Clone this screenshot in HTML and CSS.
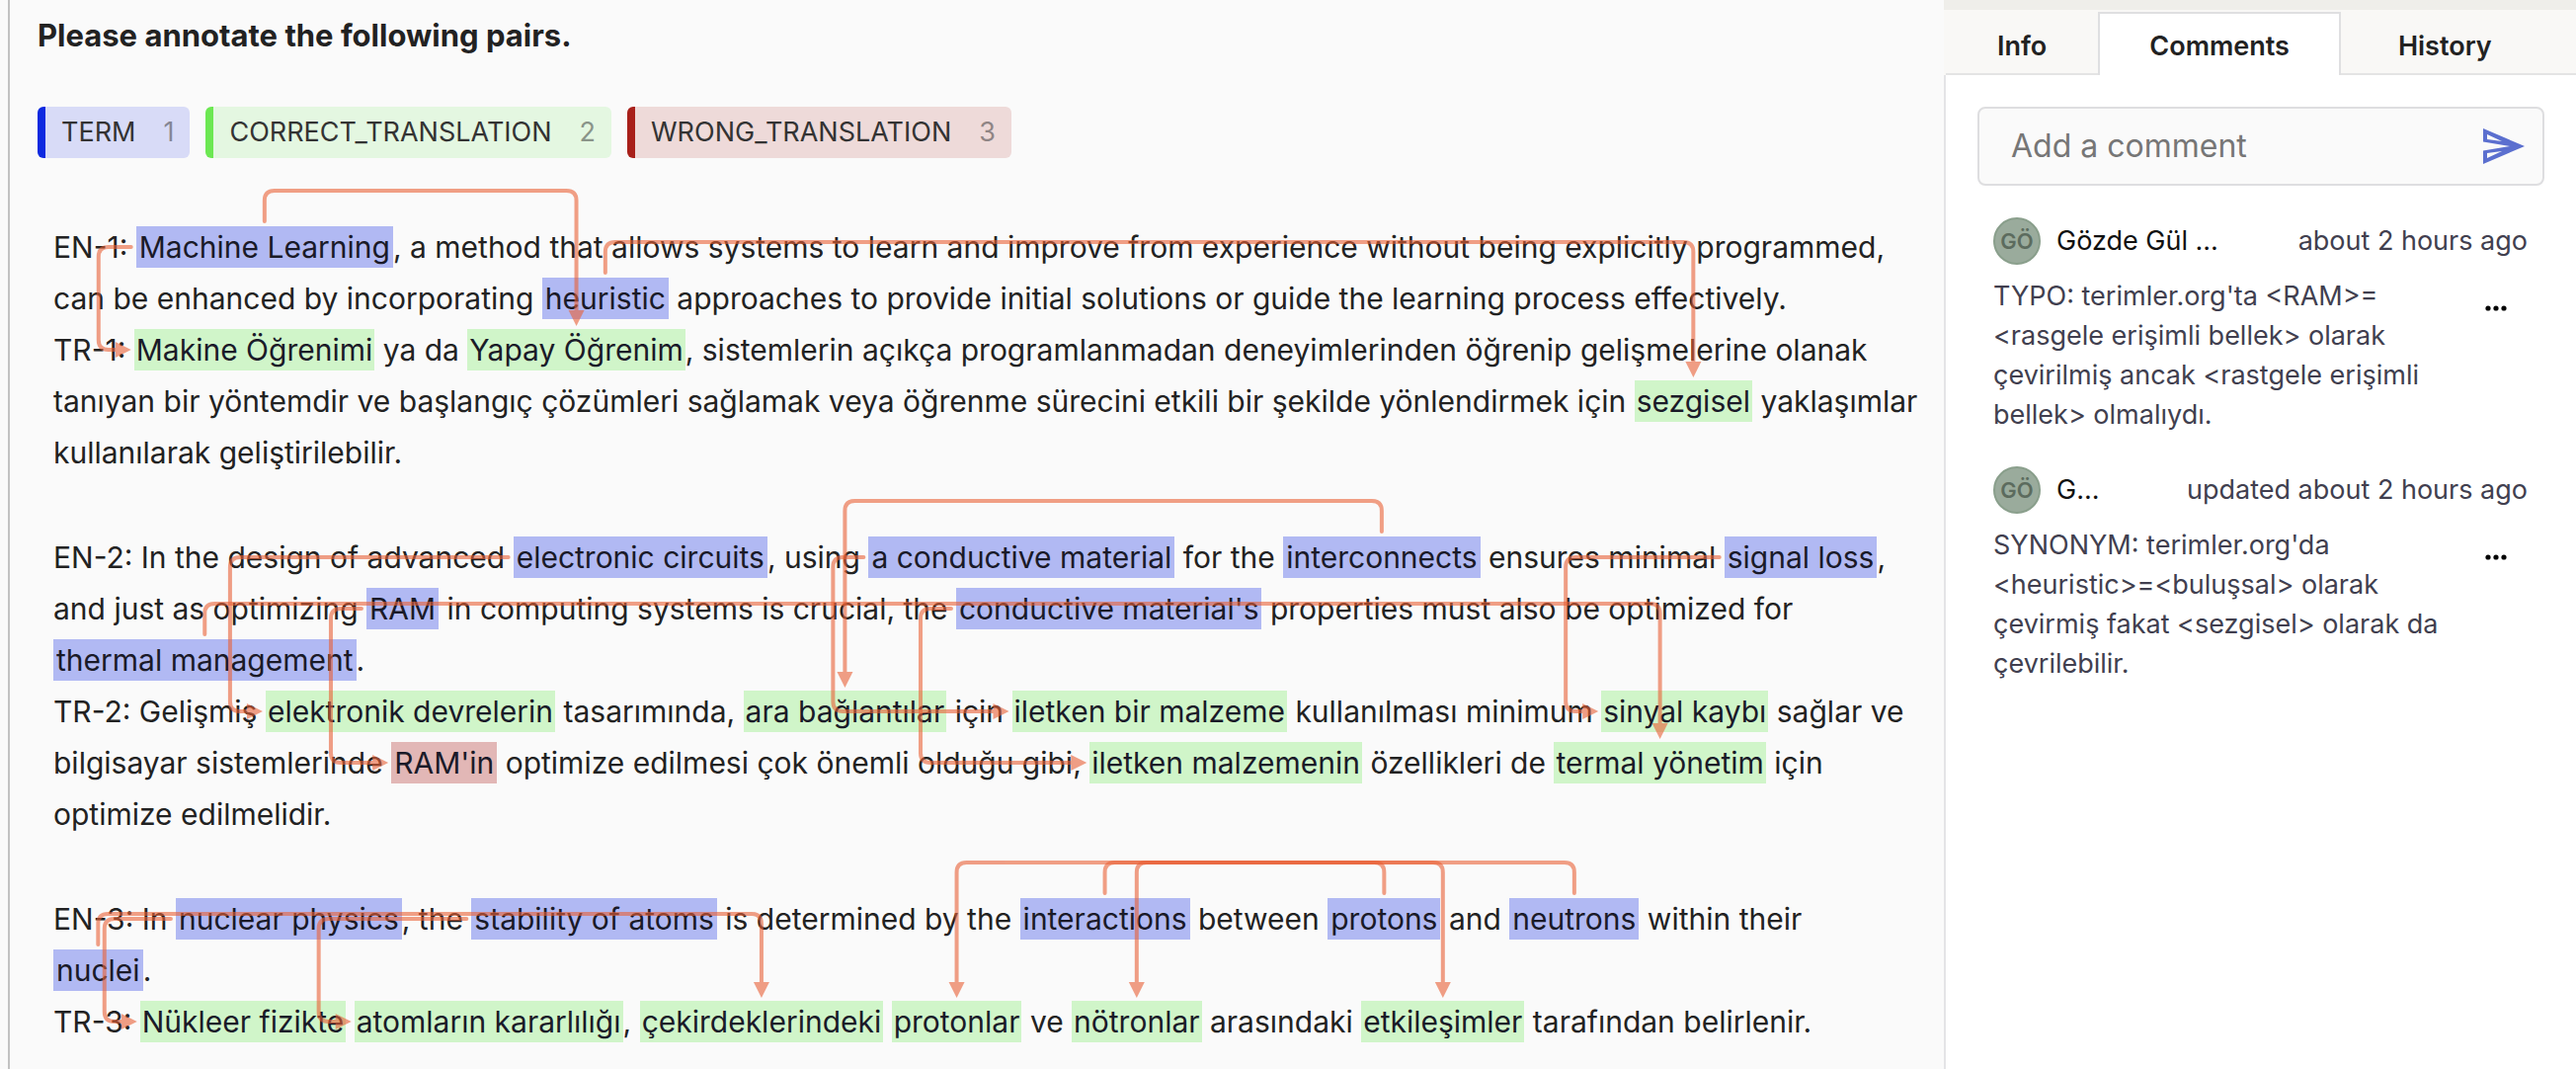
FILE: index.html
```html
<!DOCTYPE html>
<html lang="en">
<head>
<meta charset="utf-8">
<title>Annotation pairs</title>
<link rel="stylesheet" href="styles.css">
</head>
<body>
<div class="layout">
  <main class="editor">
    <h1 class="title">Please annotate the following pairs.</h1>
    <div class="labels">
      <button type="button" class="label label--term">TERM <span class="label__key">1</span></button>
      <button type="button" class="label label--correct">CORRECT_TRANSLATION <span class="label__key">2</span></button>
      <button type="button" class="label label--wrong">WRONG_TRANSLATION <span class="label__key">3</span></button>
    </div>
    <div class="document" id="document">
      <p>EN-1: <mark class="term" data-links="makine:side yapay:top">Machine Learning</mark>, a method that allows systems to learn and improve from experience without being explicitly programmed,<br>
        can be enhanced by incorporating <mark class="term" data-links="sezgisel:top">heuristic</mark> approaches to provide initial solutions or guide the learning process effectively.<br>
        TR-1: <mark class="correct" id="makine">Makine Öğrenimi</mark> ya da <mark class="correct" id="yapay">Yapay Öğrenim</mark>, sistemlerin açıkça programlanmadan deneyimlerinden öğrenip gelişmelerine olanak<br>
        tanıyan bir yöntemdir ve başlangıç çözümleri sağlamak veya öğrenme sürecini etkili bir şekilde yönlendirmek için <mark class="correct" id="sezgisel">sezgisel</mark> yaklaşımlar<br>
        kullanılarak geliştirilebilir.</p>
      <p>EN-2: In the design of advanced <mark class="term" data-links="devre:side">electronic circuits</mark>, using <mark class="term" data-links="malzeme:side">a conductive material</mark> for the <mark class="term" data-links="baglanti:top">interconnects</mark> ensures minimal <mark class="term" data-links="sinyal:side">signal loss</mark>,<br>
        and just as optimizing <mark class="term" data-links="ram:side">RAM</mark> in computing systems is crucial, the <mark class="term" data-links="malzemenin:side">conductive material's</mark> properties must also be optimized for<br>
        <mark class="term" data-links="termal:top">thermal management</mark>.<br>
        TR-2: Gelişmiş <mark class="correct" id="devre">elektronik devrelerin</mark> tasarımında, <mark class="correct" id="baglanti">ara bağlantılar</mark> için <mark class="correct" id="malzeme">iletken bir malzeme</mark> kullanılması minimum <mark class="correct" id="sinyal">sinyal kaybı</mark> sağlar ve<br>
        bilgisayar sistemlerinde <mark class="wrong" id="ram">RAM'in</mark> optimize edilmesi çok önemli olduğu gibi, <mark class="correct" id="malzemenin">iletken malzemenin</mark> özellikleri de <mark class="correct" id="termal">termal yönetim</mark> için<br>
        optimize edilmelidir.</p>
      <p>EN-3: In <mark class="term" data-links="nukleer:side">nuclear physics</mark>, the <mark class="term" data-links="atomlar:side">stability of atoms</mark> is determined by the <mark class="term" data-links="etkilesim:top">interactions</mark> between <mark class="term" data-links="proton:top">protons</mark> and <mark class="term" data-links="notron:top">neutrons</mark> within their<br>
        <mark class="term" data-links="cekirdek:top">nuclei</mark>.<br>
        TR-3: <mark class="correct" id="nukleer">Nükleer fizikte</mark> <mark class="correct" id="atomlar">atomların kararlılığı</mark>, <mark class="correct" id="cekirdek">çekirdeklerindeki</mark> <mark class="correct" id="proton">protonlar</mark> ve <mark class="correct" id="notron">nötronlar</mark> arasındaki <mark class="correct" id="etkilesim">etkileşimler</mark> tarafından belirlenir.</p>
      <svg class="relations" id="relations" aria-hidden="true"></svg>
    </div>
  </main>

  <aside class="panel">
    <div class="tabs" role="tablist">
      <button type="button" role="tab" class="tab">Info</button>
      <button type="button" role="tab" class="tab tab--active" aria-selected="true">Comments</button>
      <button type="button" role="tab" class="tab tab--last">History</button>
      <span class="tabs__rest"></span>
    </div>
    <div class="comments">
      <form class="composer">
        <input class="composer__input" type="text" placeholder="Add a comment" aria-label="Add a comment">
        <button type="button" class="composer__send" aria-label="Send">
          <svg width="42" height="36" viewBox="0 0 42 36"><path fill="#5b6fcf" fill-rule="evenodd" d="M0 0L42 18L0 36V22.500L27 18L0 13.500ZM4 6V11L19 13ZM4 30V25L19 23Z"/></svg>
        </button>
      </form>
      <article class="comment">
        <header class="comment__head">
          <span class="avatar">GÖ</span>
          <span class="comment__name">Gözde Gül ...</span>
          <time class="comment__time">about 2 hours ago</time>
        </header>
        <div class="comment__body">
          <p class="comment__text">TYPO: terimler.org'ta &lt;RAM&gt;=<br>&lt;rasgele erişimli bellek&gt; olarak<br>çevirilmiş ancak &lt;rastgele erişimli<br>bellek&gt; olmalıydı.</p>
          <button type="button" class="more" aria-label="Comment actions"><svg width="24" height="6" viewBox="0 0 24 6"><circle cx="4" cy="3" r="2.600"/><circle cx="12" cy="3" r="2.600"/><circle cx="20" cy="3" r="2.600"/></svg></button>
        </div>
      </article>
      <article class="comment">
        <header class="comment__head">
          <span class="avatar">GÖ</span>
          <span class="comment__name">G...</span>
          <time class="comment__time">updated about 2 hours ago</time>
        </header>
        <div class="comment__body">
          <p class="comment__text">SYNONYM: terimler.org'da<br>&lt;heuristic&gt;=&lt;buluşsal&gt; olarak<br>çevirmiş fakat &lt;sezgisel&gt; olarak da<br>çevrilebilir.</p>
          <button type="button" class="more" aria-label="Comment actions"><svg width="24" height="6" viewBox="0 0 24 6"><circle cx="4" cy="3" r="2.600"/><circle cx="12" cy="3" r="2.600"/><circle cx="20" cy="3" r="2.600"/></svg></button>
        </div>
      </article>
    </div>
  </aside>
</div>
<script src="relations.js"></script>
</body>
</html>
```
FILE: styles.css
```css
* {
  box-sizing: border-box;
}

body {
  margin: 0;
  background: #fafafa;
  color: #222;
  font-family: Inter, "Liberation Sans", sans-serif;
}

button,
input {
  border: 0;
  background: none;
  color: inherit;
  font: inherit;
}

.layout {
  display: flex;
  min-height: 100vh;
}

/* Editor */

.editor {
  flex: 1;
  min-width: 0;
  margin-left: 8px;
  padding: 16px 8px 16px 28px;
  border-left: 2px solid #c2c2c2;
}

.title {
  margin: 0 0 52px;
  font-size: 31px;
  font-weight: 700;
  line-height: 40px;
}

.labels {
  display: flex;
  gap: 16px;
  margin-bottom: 64px;
}

.label {
  display: flex;
  gap: 28px;
  padding: 0 16px;
  border-left: 8px solid;
  border-radius: 6px;
  color: #333;
  font-size: 27px;
  line-height: 52px;
}

.label--term {
  border-color: #0d29e0;
  background: #d8dbf7;
}

.label--correct {
  border-color: #6ce852;
  background: #e4f7e1;
}

.label--wrong {
  border-color: #a8201a;
  background: #eedad9;
}

.label__key {
  opacity: 0.5;
}

.document {
  position: relative;
  padding-left: 16px;
  font-size: 30px;
  line-height: 52px;
  white-space: nowrap;
}

.document p {
  margin: 0 0 54px;
}

.document p:last-of-type {
  margin-bottom: 0;
}

mark {
  padding: 3px;
  color: #1a1a28;
}

.term {
  background: #b1b9f3;
}

.correct {
  padding: 3px 2px;
  background: #d0f5c9;
}

.wrong {
  background: #e2b7b6;
}

.relations {
  position: absolute;
  top: 0;
  left: 0;
  width: 100%;
  height: 100%;
  overflow: visible;
  pointer-events: none;
}

.relation {
  opacity: 0.6;
}

.relation__line {
  fill: none;
  stroke: #e96036;
  stroke-width: 4px;
  stroke-linecap: round;
}

.relation__head {
  fill: #e96036;
}

/* Side panel */

.panel {
  flex: 0 0 640px;
  min-width: 0;
  border-top: 10px solid #efeeea;
  background: #fff;
  box-shadow: inset 2px 0 #e4e4e6;
}

.tabs {
  display: flex;
  height: 66px;
  padding: 2px 0 0 2px;
  background: #f9f8f6;
}

.tab {
  padding: 6px 52px 0;
  border-bottom: 2px solid #e4e4e4;
  font-size: 27px;
  font-weight: 600;
}

.tab--active {
  padding: 4px 50px 2px;
  border: 2px solid #dfdfe1;
  border-bottom: 0;
  background: #fff;
}

.tab--last {
  padding: 6px 58px 0;
}

.tabs__rest {
  flex: 1;
  border-bottom: 2px solid #e4e4e4;
}

.comments {
  display: flex;
  flex-direction: column;
  gap: 32px;
  padding: 32px;
  padding-left: 34px;
}

.composer {
  display: flex;
  align-items: center;
  height: 80px;
  padding: 0 18px 0 32px;
  border: 2px solid #dedee0;
  border-radius: 8px;
  background: #fafafa;
}

.composer__input {
  flex: 1;
  width: 0;
  min-width: 0;
  padding: 0 0 2px;
  font-size: 32px;
}

.composer__input::placeholder {
  color: #767676;
  opacity: 1;
}

.composer__send {
  display: flex;
  padding: 0;
}

.comment {
  padding: 0 17px 0 16px;
  color: #413f4f;
  font-size: 27px;
  line-height: 40px;
}

.comment__head {
  display: flex;
  align-items: center;
  gap: 16px;
  margin-bottom: 12px;
}

.avatar {
  flex: none;
  width: 48px;
  border: 2px solid #8a9f8c;
  border-radius: 50%;
  background: #9aab9c;
  color: #5c6b5e;
  font-size: 22px;
  font-weight: 600;
  line-height: 44px;
  text-align: center;
}

.comment__name {
  flex: 1;
  color: #111;
}

.comment__body {
  display: flex;
}

.comment__text {
  flex: 1;
  margin: 0;
  white-space: nowrap;
}

.more {
  flex: none;
  display: grid;
  place-items: center;
  width: 64px;
  height: 64px;
  padding: 0;
  color: #111;
}
```
FILE: relations.js
```js
// Draws an arrow from every linked term to its translation.
const SVG_NS = 'http://www.w3.org/2000/svg';
const REACH = 36;
const GAP = 4;
const RADIUS = 10;
const HEAD = 16;

function add(parent, name, attributes) {
  const node = document.createElementNS(SVG_NS, name);
  for (const key in attributes) node.setAttribute(key, attributes[key]);
  parent.append(node);
  return node;
}

function drawRelations() {
  const doc = document.getElementById('document');
  const svg = document.getElementById('relations');
  const origin = doc.getBoundingClientRect();
  svg.replaceChildren();

  const box = (el) => {
    const r = el.getBoundingClientRect();
    const left = r.left - origin.left;
    const top = r.top - origin.top;
    return { left, top, cx: left + r.width / 2, cy: top + r.height / 2 };
  };

  document.querySelectorAll('[data-links]').forEach((source) => {
    source.dataset.links.split(' ').forEach((link) => {
      const [id, mode] = link.split(':');
      const a = box(source);
      const b = box(document.getElementById(id));
      const group = add(svg, 'g', { class: 'relation' });
      let line;
      let head;

      if (mode === 'top') {
        const dir = b.cx > a.cx ? RADIUS : -RADIUS;
        const y = Math.min(a.top, b.top) - REACH;
        const tip = b.top - GAP + 1;
        line = `M${a.cx} ${a.top - GAP - 1}V${y + RADIUS}Q${a.cx} ${y} ${a.cx + dir} ${y}H${b.cx - dir}Q${b.cx} ${y} ${b.cx} ${y + RADIUS}V${tip - HEAD}`;
        head = `M${b.cx - 8} ${tip - HEAD}h16L${b.cx} ${tip}Z`;
      } else {
        const x = Math.min(a.left, b.left) - REACH;
        const tip = b.left - GAP + 1;
        line = `M${a.left - GAP - 1} ${a.cy}H${x + RADIUS}Q${x} ${a.cy} ${x} ${a.cy + RADIUS}V${b.cy - RADIUS}Q${x} ${b.cy} ${x + RADIUS} ${b.cy}H${tip - HEAD}`;
        head = `M${tip - HEAD} ${b.cy - 8}v16L${tip} ${b.cy}Z`;
      }

      add(group, 'path', { class: 'relation__line', d: line });
      add(group, 'path', { class: 'relation__head', d: head });
    });
  });
}

drawRelations();
document.fonts.ready.then(drawRelations);
window.addEventListener('resize', drawRelations);
```
